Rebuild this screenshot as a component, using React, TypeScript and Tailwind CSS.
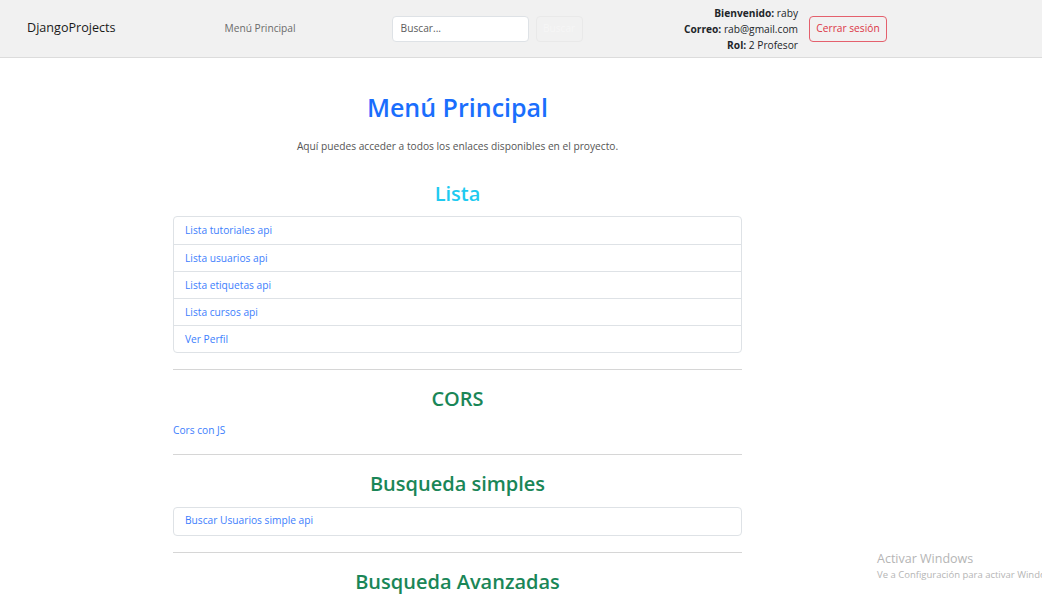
const font = { fontFamily: '"Open Sans", "Noto Sans", sans-serif' };

const listaLinks = [
  'Lista tutoriales api',
  'Lista usuarios api',
  'Lista etiquetas api',
  'Lista cursos api',
  'Ver Perfil',
];

function ListGroup({ items }: { items: string[] }) {
  return (
    <ul className="border border-[#dee2e6] rounded-[4px] bg-white">
      {items.map((t, i) => (
        <li
          key={t}
          className={`h-[27px] flex items-center pl-[11px] ${i > 0 ? 'border-t border-[#dee2e6]' : ''}`}
        >
          <a href="#" className="text-[10.2px] text-[#3d7efd]">
            {t}
          </a>
        </li>
      ))}
    </ul>
  );
}

function Navbar() {
  return (
    <nav className="h-[58px] bg-[#f1f1f1] border-b border-[#dcdcdc] flex items-center pl-[27px] pr-[155px]">
      <span className="text-[12.6px] text-[#1a1a1a]">DjangoProjects</span>
      <a href="#" className="ml-[109px] text-[10.2px] text-[#6b6b6b]">
        Menú Principal
      </a>
      <div className="ml-[96px] flex items-center gap-[7px]">
        <div className="w-[137px] h-[26px] bg-white border border-[#dee2e6] rounded-[4px] flex items-center pl-[8px] text-[10.2px] text-[#5c5c5c]">
          Buscar...
        </div>
        <div className="w-[47px] h-[26px] border border-[#e9e9e9] rounded-[4px] flex items-center justify-center text-[10.2px] text-[#f6f6f6]">
          Buscar
        </div>
      </div>
      <div className="ml-auto flex items-center gap-[11px]">
        <div className="text-right text-[10.2px] leading-[16px] text-[#212529]">
          <div>
            <b>Bienvenido:</b> raby
          </div>
          <div>
            <b>Correo:</b> rab@gmail.com
          </div>
          <div>
            <b>Rol:</b> 2 Profesor
          </div>
        </div>
        <div className="w-[78px] h-[26px] border border-[#e4606d] rounded-[4px] flex items-center justify-center text-[10.2px] text-[#dc3545]">
          Cerrar sesión
        </div>
      </div>
    </nav>
  );
}

export default function App() {
  return (
    <div className="relative w-[1042px] h-[608px] overflow-hidden bg-white" style={font}>
      <Navbar />
      <main className="ml-[173px] w-[569px]">
        <h1 className="mt-[33px] text-center text-[25px] leading-[32px] font-semibold text-[#1a6efd]">
          Menú Principal
        </h1>
        <p className="mt-[16px] text-center text-[10.2px] text-[#555]">
          Aquí puedes acceder a todos los enlaces disponibles en el proyecto.
        </p>

        <h2 className="mt-[27px] text-center text-[20px] leading-[26px] font-semibold text-[#1ecaf0]">
          Lista
        </h2>
        <div className="mt-[9px]">
          <ListGroup items={listaLinks} />
        </div>

        <hr className="mt-[16px] border-t border-[#d6d6d6]" />
        <h2 className="mt-[16px] text-center text-[20px] leading-[26px] font-semibold text-[#1a8657]">
          CORS
        </h2>
        <a href="#" className="block mt-[11px] text-[10.2px] text-[#3d7efd]">
          Cors con JS
        </a>

        <hr className="mt-[15px] border-t border-[#d6d6d6]" />
        <h2 className="mt-[16px] text-center text-[20px] leading-[26px] font-semibold text-[#1a8657]">
          Busqueda simples
        </h2>
        <div className="mt-[10px]">
          <ListGroup items={['Buscar Usuarios simple api']} />
        </div>

        <hr className="mt-[16px] border-t border-[#d6d6d6]" />
        <h2 className="mt-[16px] text-center text-[20px] leading-[26px] font-semibold text-[#1a8657]">
          Busqueda Avanzadas
        </h2>
      </main>

      <div className="absolute left-[877px] top-[550px] text-[#b5b5b5] whitespace-nowrap">
        <div className="text-[12.5px] leading-[18px]">Activar Windows</div>
        <div className="text-[9.5px] leading-[14px]">Ve a Configuración para activar Windows.</div>
      </div>
    </div>
  );
}
